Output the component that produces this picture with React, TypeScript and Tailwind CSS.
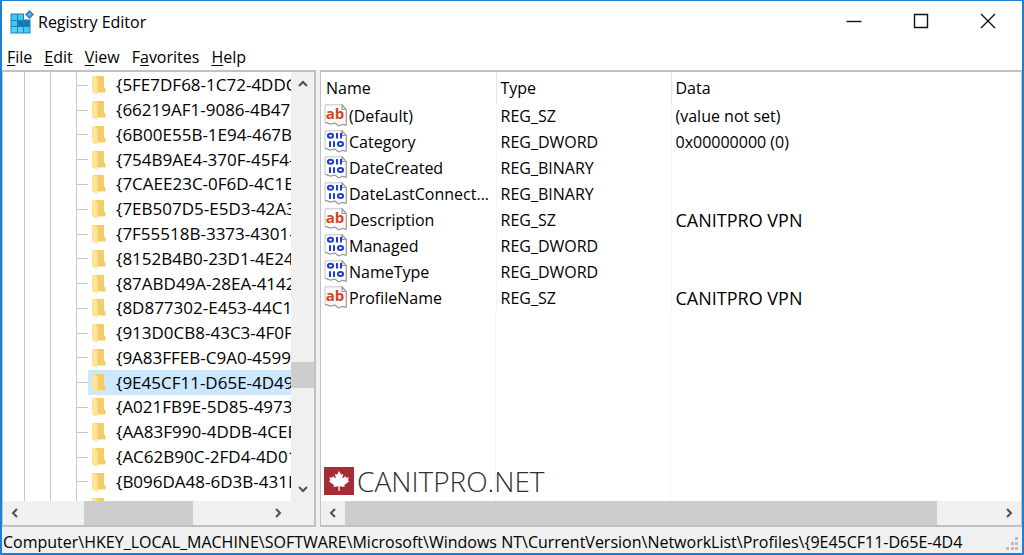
import type { ReactNode } from "react";

const keys = [
  "{5FE7DF68-1C72-4DDC",
  "{66219AF1-9086-4B47",
  "{6B00E55B-1E94-467B-",
  "{754B9AE4-370F-45F4-",
  "{7CAEE23C-0F6D-4C1E",
  "{7EB507D5-E5D3-42A3",
  "{7F55518B-3373-4301-",
  "{8152B4B0-23D1-4E24",
  "{87ABD49A-28EA-4142",
  "{8D877302-E453-44C1",
  "{913D0CB8-43C3-4F0F",
  "{9A83FFEB-C9A0-4599",
  "{9E45CF11-D65E-4D49",
  "{A021FB9E-5D85-4973",
  "{AA83F990-4DDB-4CEE",
  "{AC62B90C-2FD4-4D01",
  "{B096DA48-6D3B-431F",
  "{B27BCB98-5700-4BC9",
];
const selectedKey = "{9E45CF11-D65E-4D49";

const values = [
  { name: "(Default)", type: "REG_SZ", data: "(value not set)" },
  { name: "Category", type: "REG_DWORD", data: "0x00000000 (0)" },
  { name: "DateCreated", type: "REG_BINARY", data: "" },
  { name: "DateLastConnect...", type: "REG_BINARY", data: "" },
  { name: "Description", type: "REG_SZ", data: "CANITPRO VPN", large: true },
  { name: "Managed", type: "REG_DWORD", data: "" },
  { name: "NameType", type: "REG_DWORD", data: "" },
  { name: "ProfileName", type: "REG_SZ", data: "CANITPRO VPN", large: true },
];

const menus = [
  ["", "F", "ile"],
  ["", "E", "dit"],
  ["", "V", "iew"],
  ["F", "a", "vorites"],
  ["", "H", "elp"],
];

function RegeditIcon() {
  return (
    <svg viewBox="0 0 24 25" className="h-[25px] w-6 shrink-0" aria-hidden="true">
      <path d="M.5 3.500h13.500v6h6.500v14H.5z" fill="#1585bb" />
      <path d="M1.500 4.500h5.500v5.500H1.500zM8 4.500h5v5.500H8zM1.500 11h5.500v5H1.500zM14 17h5.500v5.500h-5.500z" fill="#45c5f0" />
      <path d="M8 11h5v5H8zM14 10.500h5.500v5.500h-5.500z" fill="#1a78ac" />
      <path d="M1.500 17h5.500v5.500H1.500zM8 17h5v5.500H8z" fill="#58d0f7" />
      <path d="M19.500 0L24 4.500 19.500 9 15 4.500z" fill="#2f86b5" />
      <path d="M19.500 2.200l2.300 2.300-2.300 2.300-2.300-2.300z" fill="#66b5da" />
    </svg>
  );
}

function FolderIcon() {
  return (
    <svg viewBox="0 0 14 20" className="h-5 w-3.5 shrink-0" aria-hidden="true">
      <path d="M2 1h10v11.500l1.500.8V17.500H3z" fill="#f5cd68" />
      <path d="M0 1h2l3.500 2v17L0 17.500z" fill="#ffe499" />
    </svg>
  );
}

function PageShape() {
  return (
    <>
      <path d="M1 .8h17l4.300 4.500V21c-1 1-2-.6-3.500-.6s-2.300 1.600-4 1.600-2.600-2.600-4.300-2.600-2 .8-4 .8S4 18.300 1 18.700z" fill="#fcfcfc" />
      <path d="M1 18.500V.8h17" fill="none" stroke="#c4c4c4" />
      <path d="M1 18.700c3-.4 3.500 1.300 5.500 1.300s2.300-.8 4-.8 2.600 2.600 4.300 2.600 2.500-1.400 4-1.400 2.500 1.400 3.500.6V5.500L18 .8v4.700h4" fill="none" stroke="#989898" strokeWidth="1.200" />
    </>
  );
}

function StringIcon() {
  return (
    <svg viewBox="0 0 24 23" className="h-[23px] w-6 shrink-0" aria-hidden="true">
      <PageShape />
      <text x="11" y="14.500" textAnchor="middle" fill="#d9441c" fontSize="15" fontWeight="700" fontFamily="Open Sans, sans-serif">
        ab
      </text>
    </svg>
  );
}

function BinaryIcon() {
  return (
    <svg viewBox="0 0 24 23" className="h-[23px] w-6 shrink-0" aria-hidden="true">
      <PageShape />
      <g fill="none" stroke="#1d3fd6" strokeWidth="2">
        <ellipse cx="6.500" cy="5.800" rx="2.600" ry="2" />
        <path d="M13 3v5.600M17 3v5.600M6 11.200v5.800M10 11.200v5.800" />
        <ellipse cx="16.500" cy="14.100" rx="2.600" ry="2" />
      </g>
    </svg>
  );
}

function ScrollButton({ label, d }: { label: string; d: string }) {
  return (
    <button type="button" aria-label={label} className="flex size-6 shrink-0 items-center justify-center">
      <svg viewBox="0 0 10 10" className="size-2.5" fill="none" stroke="#505050" strokeWidth="2" aria-hidden="true">
        <path d={d} />
      </svg>
    </button>
  );
}

const left = "M7 1L3 5l4 4";
const right = "M3 1l4 4-4 4";
const up = "M1 7l4-4 4 4";
const down = "M1 3l4 4 4-4";

function CaptionButton({ label, children }: { label: string; children: ReactNode }) {
  return (
    <button type="button" aria-label={label} className="flex h-10 w-[67px] items-center justify-center">
      <svg viewBox="0 0 16 16" className="size-4" fill="none" stroke="#111" strokeWidth="1.400" aria-hidden="true">
        {children}
      </svg>
    </button>
  );
}

export default function App() {
  return (
    <div className="flex h-screen flex-col overflow-hidden border-2 border-t-1 border-[#1a80d8] bg-[#f0f0f0] font-['Open_Sans','Noto_Sans',sans-serif] text-base leading-6 text-black">
      <header className="bg-white">
        <div className="flex h-[42px] items-start justify-between">
          <div className="flex h-full items-center gap-1 pl-2">
            <RegeditIcon />
            <h1>Registry Editor</h1>
          </div>
          <div className="flex pr-px">
            <CaptionButton label="Minimize">
              <path d="M.5 8.500h15" />
            </CaptionButton>
            <CaptionButton label="Maximize">
              <path d="M1.500 1.500h13v13h-13z" />
            </CaptionButton>
            <CaptionButton label="Close">
              <path d="M1 1l14 14M15 1L1 15" />
            </CaptionButton>
          </div>
        </div>
        <nav className="flex h-[27px] items-end gap-3 pb-px pl-[5px]">
          {menus.map(([before, key, after]) => (
            <button type="button" key={key}>
              {before}
              <span className="underline underline-offset-2">{key}</span>
              {after}
            </button>
          ))}
        </nav>
      </header>

      <main className="flex min-h-0 flex-1 gap-1">
        <section className="flex w-[314px] shrink-0 flex-col border-2 border-l-1 border-[#bfc1c6] bg-white" aria-label="Keys">
          <div className="flex min-h-0 flex-1">
            <div className="flex min-w-0 flex-1 overflow-hidden pl-[21px]">
              <div className="w-[26px] shrink-0 border-l border-[#c8c8c8]" />
              <div className="w-[26px] shrink-0 border-l border-[#c8c8c8]" />
              <ul className="grid h-[447px] min-w-0 flex-1 auto-rows-fr border-l border-[#c8c8c8] pt-px text-[17px]">
                {keys.map((k) => (
                  <li key={k} className="flex min-w-0 items-center">
                    <span className="w-[11px] shrink-0 border-t border-[#c8c8c8]" />
                    <button
                      type="button"
                      className={
                        k === selectedKey
                          ? "flex h-full min-w-0 flex-1 items-center gap-2.5 overflow-hidden bg-[#cce8ff] pl-1 whitespace-nowrap"
                          : "flex h-full min-w-0 flex-1 items-center gap-2.5 overflow-hidden pl-1 whitespace-nowrap"
                      }
                    >
                      <FolderIcon />
                      <span>{k}</span>
                    </button>
                  </li>
                ))}
              </ul>
            </div>
            <div className="flex w-[23px] shrink-0 flex-col bg-[#f0f0f0]">
              <ScrollButton label="Scroll up" d={up} />
              <div className="flex flex-1 flex-col">
                <div className="flex-[265]" />
                <div className="flex-[25] bg-[#cdcdcd]" />
                <div className="flex-[89]" />
              </div>
              <ScrollButton label="Scroll down" d={down} />
            </div>
          </div>
          <div className="flex h-6 shrink-0 bg-[#f0f0f0] pr-6">
            <ScrollButton label="Scroll left" d={left} />
            <div className="flex flex-1">
              <div className="flex-[57]" />
              <div className="flex-[109] bg-[#cdcdcd]" />
              <div className="flex-[73]" />
            </div>
            <ScrollButton label="Scroll right" d={right} />
          </div>
        </section>

        <section className="flex min-w-0 flex-1 flex-col border-2 border-r-1 border-l-1 border-[#bfc1c6] bg-white" aria-label="Values">
          <div className="flex min-h-0 flex-1 flex-col overflow-hidden">
            <table className="w-full table-fixed border-collapse text-left">
              <colgroup>
                <col className="w-[175px]" />
                <col className="w-[175px]" />
                <col />
              </colgroup>
              <thead>
                <tr className="h-[31px]">
                  <th className="border-r border-[#e5e5e5] p-0 pl-[5px] font-normal">Name</th>
                  <th className="border-r border-[#e5e5e5] p-0 pl-1 font-normal">Type</th>
                  <th className="p-0 pl-1 font-normal">Data</th>
                </tr>
              </thead>
              <tbody>
                {values.map((v) => (
                  <tr key={v.name} className="h-[26px]">
                    <td className="border-r border-[#f1f6fc] p-0 pl-[3px]">
                      <div className="flex items-start gap-px whitespace-nowrap">
                        {v.type === "REG_SZ" ? <StringIcon /> : <BinaryIcon />}
                        {v.name}
                      </div>
                    </td>
                    <td className="border-r border-[#f1f6fc] p-0 pl-1">{v.type}</td>
                    <td className={v.large ? "p-0 pl-1 text-lg leading-6" : "p-0 pl-1"}>{v.data}</td>
                  </tr>
                ))}
              </tbody>
            </table>
            <div className="flex flex-1">
              <div className="flex w-[175px] shrink-0 items-end border-r border-[#f1f6fc] pb-1.5 pl-[3px]">
                <a href="#canitpro" className="flex items-center gap-[3px] text-[28px] leading-7 font-light whitespace-nowrap text-[#303030]">
                  <svg viewBox="0 0 30 28" className="h-7 w-[30px] shrink-0" aria-hidden="true">
                    <path d="M0 0h30v28H0z" fill="#a82c35" />
                    <path d="M15 4l2.200 3.800 2-1-.9 5 3-2.800.7 1.800 2.800-.5-.9 3 1.300.9-5 4 .5 1.800-5-.7.1 4.500h-1.400l.1-4.500-5 .7.5-1.800-5-4 1.300-.9-.9-3 2.800.5.7-1.800 3 2.800-.9-5 2 1z" fill="#fff" />
                  </svg>
                  CANITPRO.NET
                </a>
              </div>
              <div className="w-[175px] border-r border-[#f1f6fc]" />
            </div>
          </div>
          <div className="flex h-6 shrink-0 bg-[#f0f0f0]">
            <ScrollButton label="Scroll left" d={left} />
            <div className="flex flex-1">
              <div className="flex-[591] bg-[#cdcdcd]" />
              <div className="flex-[60]" />
            </div>
            <ScrollButton label="Scroll right" d={right} />
          </div>
        </section>
      </main>

      <footer className="flex h-[26px] shrink-0 items-center pl-px">
        <p className="min-w-0 flex-1 overflow-hidden pt-[3px] whitespace-nowrap">
          Computer\HKEY_LOCAL_MACHINE\SOFTWARE\Microsoft\Windows NT\CurrentVersion\NetworkList\Profiles\&#123;9E45CF11-D65E-4D4
        </p>
        <svg viewBox="0 0 22 26" className="h-[26px] w-[22px] shrink-0" fill="#bdbdbd" aria-hidden="true">
          <path d="M15 10h3v3h-3zM11 15h3v3h-3zM15 15h3v3h-3zM6 20h3v3H6zM11 20h3v3h-3zM15 20h3v3h-3z" />
        </svg>
      </footer>
    </div>
  );
}
